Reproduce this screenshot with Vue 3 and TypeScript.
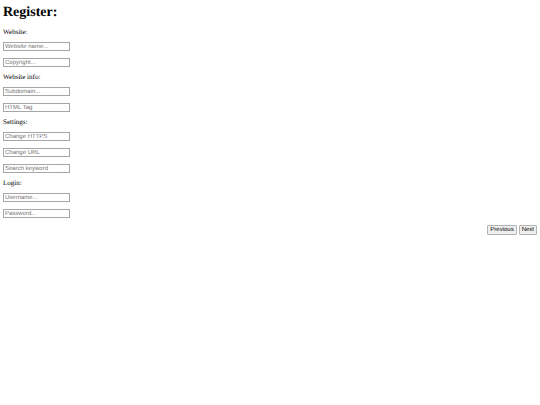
<script setup lang="ts">
interface Field {
  name: string
  label: string
  type?: string
}

interface Section {
  title: string
  fields: Field[]
}

const sections: Section[] = [
  {
    title: 'Website:',
    fields: [
      { name: 'site', label: 'Website name...' },
      { name: 'copyright', label: 'Copyright...' },
    ],
  },
  {
    title: 'Website info:',
    fields: [
      { name: 'subdomain', label: 'Subdomain...' },
      { name: 'tag', label: 'HTML Tag' },
    ],
  },
  {
    title: 'Settings:',
    fields: [
      { name: 'https', label: 'Change HTTPS' },
      { name: 'url', label: 'Change URL' },
      { name: 'keyword', label: 'Search keyword' },
    ],
  },
  {
    title: 'Login:',
    fields: [
      { name: 'username', label: 'Username...' },
      { name: 'password', label: 'Password...', type: 'password' },
    ],
  },
]
</script>

<template>
  <form class="register" @submit.prevent>
    <h1>Register:</h1>
    <fieldset v-for="section in sections" :key="section.title">
      <legend>{{ section.title }}</legend>
      <div class="fields">
        <input
          v-for="field in section.fields"
          :key="field.name"
          :type="field.type ?? 'text'"
          :name="field.name"
          :placeholder="field.label"
          :aria-label="field.label"
        />
      </div>
    </fieldset>
    <div class="actions">
      <button type="button">Previous</button>
      <button type="button">Next</button>
    </div>
  </form>
</template>

<style>
body {
  margin: 0;
  background: #fff;
}
</style>

<style scoped>
.register {
  padding: 3px;
  color: #000;
  font-family: 'Liberation Serif', serif;
  font-size: 7px;
  text-rendering: geometricPrecision;
}

h1 {
  margin: 0 0 6px;
  font-size: 14px;
  line-height: 19px;
}

fieldset {
  min-width: 0;
  margin: 0 0 6px;
  padding: 0;
  border: 0;
}

legend {
  padding: 0;
  line-height: 8px;
}

.fields {
  display: flex;
  flex-direction: column;
  align-items: flex-start;
  gap: 7px;
  padding-top: 6px;
}

input {
  box-sizing: border-box;
  width: 67px;
  height: 9px;
  margin: 0;
  padding: 0 1px;
  border: 1px solid #a6a6a6;
  background: #fff;
  font-family: 'Liberation Sans', sans-serif;
  font-size: 6px;
  line-height: 7px;
  text-rendering: inherit;
}

input::placeholder {
  color: #757575;
  opacity: 1;
}

.actions {
  display: flex;
  justify-content: flex-end;
  gap: 2px;
  padding-top: 1px;
}

button {
  box-sizing: border-box;
  height: 10px;
  margin: 0;
  padding: 1px 2px 0;
  border: 1px solid #b4b4b4;
  border-radius: 1px;
  background: #efefef;
  color: #000;
  font-family: 'Liberation Sans', sans-serif;
  font-size: 6px;
  line-height: 7px;
  text-rendering: inherit;
}
</style>
